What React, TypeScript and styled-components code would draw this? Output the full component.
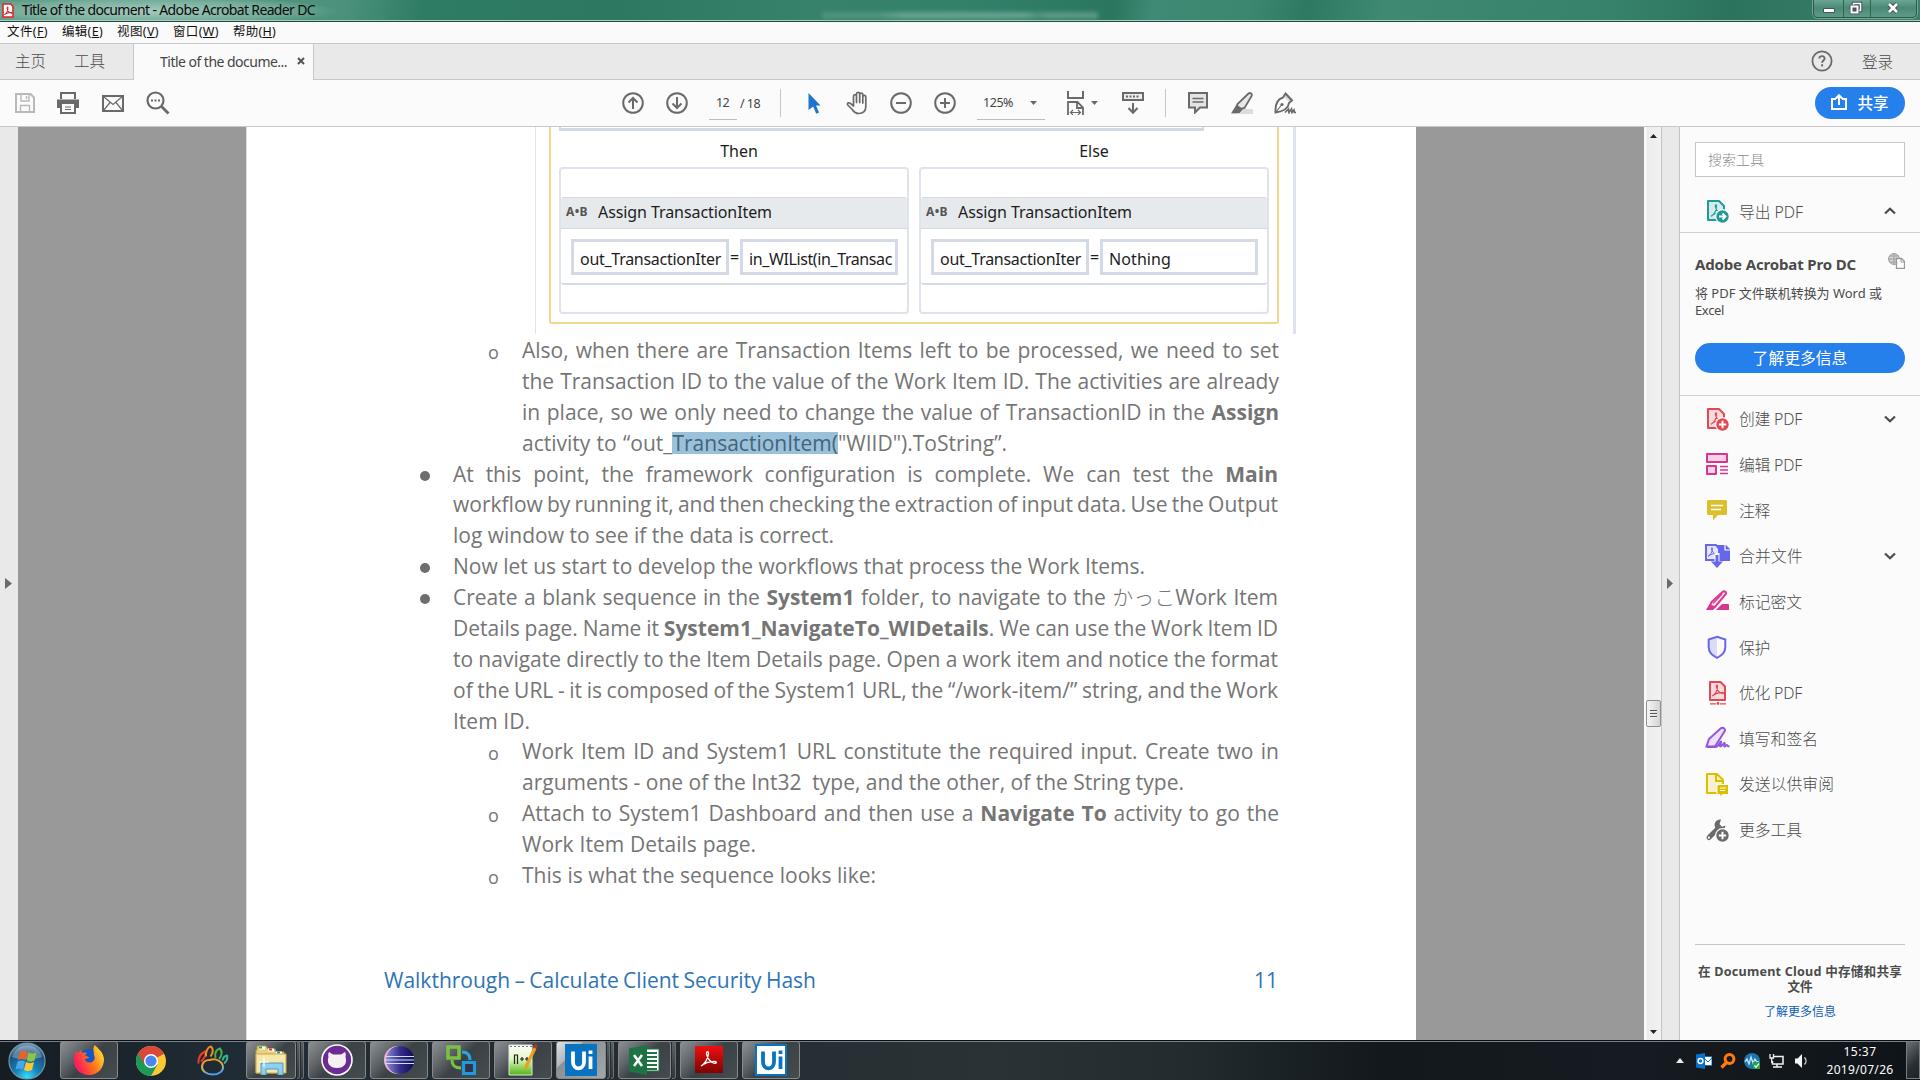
import React, { useLayoutEffect, useRef, useState } from "react";
import styled, { createGlobalStyle, css } from "styled-components";

const UI = `"Noto Sans", "Noto Sans CJK SC", "Open Sans", sans-serif`;
const DOC = `"Open Sans", "Noto Sans CJK JP", sans-serif`;

const Global = createGlobalStyle`
  * { box-sizing: border-box; }
  body { margin: 0; overflow: hidden; background: #fafafa; font-family: ${UI}; }
`;

/* ---------- text fitted to a given width ---------- */

const FitSpan = styled.span`
  display: inline-block;
  white-space: pre;
  flex: none;
`;

type FitProps = { w: number; by?: "word" | "letter"; children: React.ReactNode };

function Fit({ w, by = "letter", children }: FitProps) {
  const ref = useRef<HTMLSpanElement>(null);
  const [gap, setGap] = useState(0);
  useLayoutEffect(() => {
    const el = ref.current;
    if (!el) return;
    const text = el.textContent || "";
    const n = by === "word" ? text.split(" ").length - 1 : text.length;
    if (n > 0) setGap((w - el.getBoundingClientRect().width) / n);
  }, []);
  return (
    <FitSpan ref={ref} style={by === "word" ? { wordSpacing: gap } : { letterSpacing: gap }}>
      {children}
    </FitSpan>
  );
}

/* ---------- window chrome ---------- */

const Window = styled.div`
  width: 1920px;
  height: 1080px;
  display: flex;
  flex-direction: column;
  overflow: hidden;
`;

const TitleBar = styled.header`
  height: 22px;
  flex: none;
  display: flex;
  align-items: flex-start;
  border-bottom: 1px solid #1d4a3f;
  box-shadow: inset 0 -1px 0 #a9cfc2;
  background: radial-gradient(ellipse 190px 15px at 150px 11px, rgba(190, 218, 208, 0.75), rgba(150, 195, 180, 0.5) 70%, transparent),
    linear-gradient(100deg, #5d9c87 0, #4c917b 18%, #2f7c65 22%, #2c7860 32%, #37826b 42%, #34806a 50%, #2a765f 58%, #3f8a74 60%, #3b8770 65%, #2d7962 68%, #3f8973 72%, #37826b 84%, #2c735d 90%, #3d7f6a 100%);
`;

const AppMark = styled.div`
  width: 22px;
  height: 20px;
  padding: 3px 0 0 2px;
`;

const WindowTitle = styled.div`
  width: 800px;
  font-size: 14px;
  line-height: 20px;
  color: #0b0b0b;
`;

const Ghost = styled.div`
  width: 276px;
  height: 7px;
  margin-top: 12px;
  filter: blur(2px);
  background: linear-gradient(90deg, #5f9d8a 0 20%, #7fb5a4 30% 74%, #5f9d8a 78%, #74ab9a 82% 100%);
  opacity: 0.65;
`;

const Controls = styled.div`
  margin-left: auto;
  margin-right: 3px;
  width: 104px;
  height: 18px;
  display: flex;
  border: 1px solid #2a5a4c;
  border-top: 0;
  border-radius: 0 0 5px 5px;
  box-shadow: 0 0 0 1px rgba(190, 220, 210, 0.45);
  background: linear-gradient(#6ba593, #4b8a76 45%, #5f9a88);
`;

const Control = styled.div<{ $w: number }>`
  width: ${(p) => p.$w}px;
  display: flex;
  justify-content: center;
  & + & { border-left: 1px solid #2f6353; }
`;

const MenuBar = styled.nav`
  height: 22px;
  flex: none;
  display: flex;
  padding-left: 7px;
  gap: 14px;
  border-bottom: 1px solid #c8c8c8;
  font-size: 12.5px;
  line-height: 20px;
  color: #111;
  background: #fafafa;
`;

const TabBar = styled.div`
  height: 36px;
  flex: none;
  display: flex;
  align-items: stretch;
  background: #e9e9e9;
  box-shadow: inset 0 -1px 0 #c8c8c8;
  color: #4b4b4b;
`;

const TabLabel = styled.div<{ $ml: number }>`
  margin-left: ${(p) => p.$ml}px;
  font-size: 15.5px;
  font-weight: 300;
  line-height: 34px;
`;

const DocTab = styled.div`
  margin-left: 28px;
  width: 181px;
  padding: 0 0 2px 26px;
  display: flex;
  align-items: center;
  gap: 10px;
  background: #fafafa;
  border: solid #c8c8c8;
  border-width: 0 1px;
  font-size: 14px;
  color: #444;
`;

const TabRight = styled.div`
  margin-left: auto;
  margin-right: 27px;
  padding-bottom: 2px;
  display: flex;
  align-items: center;
  gap: 29px;
  font-size: 15.5px;
  font-weight: 300;
`;

const Toolbar = styled.div`
  height: 47px;
  flex: none;
  display: flex;
  align-items: center;
  background: #fbfbfb;
  border-bottom: 1px solid #c8c8c8;
  color: #6a6a6a;
`;

const Slot = styled.div<{ $ml: number; $w: number }>`
  margin-left: ${(p) => p.$ml}px;
  width: ${(p) => p.$w}px;
  flex: none;
  height: 24px;
  display: flex;
  align-items: center;
  justify-content: center;
`;

const Field = styled.div<{ $ml: number; $w: number; $pl: number }>`
  margin: 4px 0 0 ${(p) => p.$ml}px;
  width: ${(p) => p.$w}px;
  padding: 0 8px 4px ${(p) => p.$pl}px;
  flex: none;
  height: 29px;
  display: flex;
  align-items: center;
  justify-content: space-between;
  border-bottom: 1px solid #bdbdbd;
  font-size: 12.5px;
  color: #444;
`;

const PageTotal = styled.div`
  margin-left: 3px;
  width: 20px;
  font-size: 12.5px;
  color: #444;
`;

const Divider = styled.div<{ $ml: number }>`
  margin-left: ${(p) => p.$ml}px;
  width: 1px;
  height: 28px;
  background: #c6c6c6;
`;

const ShareButton = styled.button`
  margin: 0 15px 0 auto;
  width: 90px;
  height: 32px;
  border: 0;
  border-radius: 16px;
  background: #2680eb;
  color: #fff;
  font: 500 15.5px ${UI};
  display: flex;
  align-items: center;
  justify-content: center;
  gap: 10px;
  padding: 0 0 2px;
`;

/* ---------- body ---------- */

const Body = styled.div`
  flex: 1;
  display: flex;
  min-height: 0;
`;

const SideStrip = styled.div<{ $w: number; $right?: boolean }>`
  width: ${(p) => p.$w}px;
  flex: none;
  display: flex;
  align-items: center;
  padding-left: 5px;
  background: #e9e9e9;
  ${(p) => p.$right && css`border: solid #c4c4c4; border-width: 0 1px;`}
`;

const Canvas = styled.main`
  width: 1626px;
  flex: none;
  padding: 0 228px;
  background: #999;
  overflow: hidden;
`;

const Sheet = styled.article`
  width: 1170px;
  height: 100%;
  background: #fff;
  font-family: ${DOC};
  font-size: 21px;
  color: #757575;
  border-left: 1px solid #ddd;
`;

/* diagram */

const Figure = styled.figure`
  margin: 0 0 1px 288px;
  width: 761px;
  height: 207px;
  padding-left: 13px;
  border: solid #dfe4ec;
  border-width: 0 3px 0 1px;
  font-family: ${UI};
  font-size: 16px;
  color: #1d1d1d;
`;

const IfFrame = styled.div`
  width: 730px;
  height: 197px;
  padding: 0 8px;
  border: 2px solid #f0d68c;
  border-top: 0;
  border-radius: 0 0 3px 3px;
`;

const Condition = styled.div`
  width: 645px;
  height: 4px;
  border: solid #d3dae5;
  border-width: 0 2px 3px;
`;

const Branches = styled.div`
  display: flex;
  gap: 10px;
`;

const Branch = styled.section`
  width: 350px;
`;

const BranchName = styled.div<{ $shift: number }>`
  height: 36px;
  line-height: 41px;
  text-align: center;
  padding-left: ${(p) => p.$shift}px;
`;

const BranchBox = styled.div`
  height: 147px;
  border: 2px solid #dfe4ec;
  border-radius: 4px;
  padding-top: 28px;
`;

const Activity = styled.div`
  height: 88px;
  border: 1px solid #d3dae5;
  border-width: 1px 0 2px;
  border-radius: 3px;
`;

const ActivityHead = styled.div`
  height: 31px;
  display: flex;
  align-items: center;
  gap: 10px;
  padding: 0 0 3px 5px;
  background: #e7eaed;
  border-bottom: 1px solid #d3dae5;
`;

const AB = styled.span`
  font-size: 12px;
  font-weight: 700;
  color: #555;
  display: inline-flex;
  width: 22px;
`;

const AssignRow = styled.div`
  display: flex;
  align-items: center;
  padding: 10px 0 0 10px;
`;

const Input = styled.div`
  width: 158px;
  height: 36px;
  border: 3px solid #d3dae5;
  padding: 0 3px 0 6px;
  line-height: 34px;
  white-space: nowrap;
`;

const Equals = styled.div`
  width: 11px;
  display: flex;
  justify-content: center;
  font-size: 16px;
`;

/* document text */

const Line = styled.div<{ $level: 1 | 2 }>`
  height: 30.88px;
  line-height: 30.88px;
  display: flex;
  padding-left: ${(p) => (p.$level === 1 ? 172 : 241)}px;
`;

const Marker = styled.div<{ $level: 1 | 2 }>`
  width: 34px;
  flex: none;
  font-size: 18px;
  padding-top: 2px;
`;

const Dot = styled.div`
  width: 10px;
  height: 10px;
  margin-top: 10px;
  margin-left: 1px;
  border-radius: 50%;
  background: #6e6e6e;
`;

const Mark = styled.span`
  background: #99c1da;
  color: #46637a;
  padding: 0;
  line-height: 22px;
  display: inline-block;
  height: 22px;
`;

const Kana = styled.span`
  font-family: "Noto Sans CJK JP", sans-serif;
  font-weight: 300;
  font-size: 21px;
  line-height: 20px;
`;

const PageFooter = styled.footer`
  margin: 74px 138px 0 137px;
  line-height: 31px;
  display: flex;
  justify-content: space-between;
  color: #2e74b5;
`;

/* scrollbar */

const ScrollBar = styled.div`
  width: 17px;
  flex: none;
  display: flex;
  flex-direction: column;
  align-items: center;
  padding: 7px 1px 6px 2px;
  background: linear-gradient(90deg, #fafafa 0 2px, #ececec 3px, #f2f2f2);
`;

const Thumb = styled.div`
  width: 15px;
  height: 27px;
  margin: 562px 0 auto;
  border: 1px solid #8f8f8f;
  border-radius: 2px;
  background: linear-gradient(90deg, #f5f5f5, #d4d4d8);
  display: flex;
  flex-direction: column;
  align-items: center;
  justify-content: center;
  gap: 1px;
`;

const Grip = styled.i`
  width: 7px;
  height: 2px;
  background: #555;
  border-bottom: 1px solid #eee;
`;

/* tools panel */

const Panel = styled.aside`
  flex: 1;
  display: flex;
  flex-direction: column;
  background: #fbfbfb;
  color: #4b4b4b;
`;

const Search = styled.div`
  margin: 15px 15px 0;
  height: 35px;
  flex: none;
  border: 1px solid #c6c6c6;
  background: #fff;
  padding-left: 12px;
  font-size: 14px;
  font-weight: 300;
  line-height: 33px;
  color: #8a8a8a;
`;

const ToolRow = styled.div<{ $h: number; $rule?: boolean }>`
  height: ${(p) => p.$h}px;
  flex: none;
  display: flex;
  align-items: center;
  padding: 0 24px 0 25px;
  font-size: 15.8px;
  font-weight: 300;
  ${(p) => p.$rule && css`border-bottom: 1px solid #d0d0d0; margin-top: 15px; padding-bottom: 2px;`}
`;

const ToolIcon = styled.div`
  width: 24px;
  height: 24px;
  margin-right: 10px;
`;

const Chevron = styled.div`
  margin-left: auto;
  display: flex;
`;

const Promo = styled.div`
  height: 163px;
  flex: none;
  border-bottom: 1px solid #d0d0d0;
  padding: 20px 15px 0;
  font-size: 13px;
  line-height: 17px;
`;

const PromoHead = styled.div`
  display: flex;
  justify-content: space-between;
  height: 32px;
  font-size: 15px;
  font-weight: 700;
  line-height: 23px;
`;

const PromoButton = styled.button`
  margin-top: 24px;
  width: 210px;
  height: 30px;
  border: 0;
  border-radius: 15px;
  padding: 0;
  background: #2680eb;
  color: #fff;
  font: 400 15.8px/30px ${UI};
`;

const ToolList = styled.div`
  height: 459px;
`;

const CloudNote = styled.div`
  margin: auto 15px 11px;
  height: 85px;
  border-top: 1px solid #c6c6c6;
  padding-top: 19px;
  text-align: center;
  font-size: 12.6px;
  font-weight: 700;
  line-height: 15px;
`;

const CloudLink = styled.a`
  display: block;
  margin-top: 10px;
  font-size: 12px;
  font-weight: 400;
  color: #0d5bb5;
`;

/* taskbar */

const TaskBar = styled.footer`
  height: 40px;
  flex: none;
  display: flex;
  align-items: stretch;
  border-top: 1px solid #0b0f13;
  box-shadow: inset 0 1px 0 #75818d;
  background: linear-gradient(90deg, #151c22, #202c35 12%, #232b31 30%, #2a3236 52%, #232b2f 62%, #12181c 72%, #151b20 85%, #0f1418);
`;

const Orb = styled.div`
  width: 60px;
  display: flex;
  padding: 1px 0 0 8px;
`;

const Task = styled.div<{ $w: number; $plain?: boolean; $active?: boolean; $ml?: number }>`
  width: ${(p) => p.$w}px;
  margin-left: ${(p) => p.$ml ?? 4}px;
  display: flex;
  align-items: center;
  justify-content: center;
  ${(p) =>
    !p.$plain &&
    css`
      border: 1px solid #87898b;
      border-radius: 3px;
      margin-bottom: 1px;
      background: ${p.$active
        ? "linear-gradient(135deg, #e0e2e3 0, #b4b8ba 30%, #8a9093 32%, #a2a7a9 100%)"
        : "linear-gradient(135deg, #8b9093 0, #5f6569 30%, #3b4246 50%, #454c50 100%)"};
    `}
`;

const Stack = styled.div<{ $w: number }>`
  width: ${(p) => p.$w}px;
  margin: 0 0 1px 1px;
  border: solid #6b7175;
  border-width: 1px 1px 1px 0;
  border-radius: 0 3px 3px 0;
  background: linear-gradient(#5b6266, #2f363a);
`;

const Tray = styled.div`
  margin-left: auto;
  display: flex;
  align-items: center;
`;

const TraySlot = styled.div<{ $ml: number }>`
  margin-left: ${(p) => p.$ml}px;
  display: flex;
`;

const Clock = styled.div`
  width: 92px;
  margin-left: 6px;
  padding-top: 1px;
  color: #fff;
  font-size: 12px;
  line-height: 18px;
  text-align: center;
`;

const ShowDesktop = styled.div`
  width: 14px;
  margin-bottom: 1px;
  align-self: stretch;
  border: 1px solid #777d82;
  background: linear-gradient(135deg, #6b7074, #2a2f33 60%, #1c2125);
`;

/* ---------- drawings ---------- */

const Svg = ({ w, h = w, vb, children }: { w: number; h?: number; vb?: string; children: React.ReactNode }) => (
  <svg width={w} height={h} viewBox={vb ?? `0 0 ${w} ${h}`} fill="none" display="block">
    {children}
  </svg>
);

const G = "#6a6a6a";
const ACRO = "M5 16.2c2.8-1.4 5.3-5.4 5.6-10.2.2-1.8-1.6-1.5-1.3.2.6 3.9 3.5 7.4 6.6 7.7 1.6 0 1.1-1.5-.5-1.4-3.4.1-7.4 1.4-10.4 3.7z";

const CircleIcon = ({ d }: { d: string }) => (
  <Svg w={22}>
    <circle cx="11" cy="11" r="9.8" stroke={G} strokeWidth="2" />
    <path d={d} stroke={G} strokeWidth="2" />
  </Svg>
);

const Caret = () => (
  <Svg w={7} h={4}><path d="M0 0h7L3.5 4z" fill={G} /></Svg>
);

const SaveIcon = () => (
  <Svg w={20}>
    <path d="M1 1h14.5L19 4.5V19H1z" stroke="#b9b9b9" strokeWidth="2" />
    <path d="M6 1v7h8V1M11.5 3v3M5.5 19v-6.5h9V19" stroke="#b9b9b9" strokeWidth="1.4" />
  </Svg>
);
const PrintIcon = () => (
  <Svg w={22}>
    <path d="M0 7.5h22V16h-3.500v-4h-15v4H0z" fill={G} />
    <path d="M4 7V1h14v6M4 12v9h14v-9" stroke={G} strokeWidth="2" />
    <path d="M8 15h6M8 17.500h6" stroke={G} />
  </Svg>
);
const MailIcon = () => (
  <Svg w={22} h={17}>
    <path d="M1 1h20v15H1z" stroke={G} strokeWidth="2" />
    <path d="M1.5 1.5L11 9.5l9.5-8M1.5 15.5L8 7.5M20.500 15.500L14 7.500" stroke={G} strokeWidth="1.2" />
  </Svg>
);
const FindIcon = () => (
  <Svg w={24}>
    <circle cx="9.500" cy="9.500" r="8" stroke={G} strokeWidth="2.2" />
    <path d="M15.500 15.500L22.500 22.500" stroke={G} strokeWidth="2.8" />
    <path d="M5 8.500h2v2H5zM8.500 8.500h2v2h-2zM12 8.500h2v2h-2z" fill={G} />
  </Svg>
);
const HandIcon = () => (
  <Svg w={24}>
    <path d="M7.500 15V5.200c0-2.200 3-2.200 3 0V11.500V3c0-2.200 3.200-2.200 3.200 0v8.500V3.600c0-2.100 3.100-2.100 3.100 0V12V5.800c0-1.900 3-1.900 3 0V15.500c0 4.500-2.800 7-7 7-3.400 0-5-1.500-6.500-4L1.700 14c-1-2.200 1.500-3 3-1.300z"
      stroke={G} strokeWidth="1.700" strokeLinejoin="round" />
  </Svg>
);
const PointerIcon = () => (
  <Svg w={13} h={21}>
    <path d="M.5 0L12.500 12.500H8l3 7-2.800 1.300-3-7.300L.5 17z" fill="#1f74cf" />
  </Svg>
);
const FitPageIcon = () => (
  <Svg w={17} h={24}>
    <path d="M1 0v7h15V0" stroke={G} strokeWidth="2" />
    <path d="M1 24V11h9.500L16 16.500V24M10 11v6h6" stroke={G} strokeWidth="1.800" />
    <path d="M4 21.500h9M6 19l-2.500 2.500L6 24M11 19l2.500 2.500L11 24" stroke={G} strokeWidth="1.200" />
  </Svg>
);
const ScrollIcon = () => (
  <Svg w={22}>
    <path d="M1 1h20v7H1z" fill="#ededed" stroke={G} strokeWidth="2" />
    <path d="M4 4.500h14" stroke={G} strokeWidth="2" strokeDasharray="2 1.500" />
    <path d="M11 11v9.500M6.500 16l4.500 4.800 4.500-4.800" stroke={G} strokeWidth="2" />
  </Svg>
);
const NoteIcon = () => (
  <Svg w={20} h={22}>
    <path d="M1 1h18v14.500h-7L7 20.500v-5H1z" fill="#e4e4e4" stroke={G} strokeWidth="2" />
    <path d="M4.500 6.500h11M4.500 10h11" stroke={G} strokeWidth="1.300" />
  </Svg>
);
const MarkerIcon = () => (
  <Svg w={24} h={22}>
    <path d="M7 17h16v5H4z" fill="#dcdcdc" />
    <path d="M18.500 1.500c2-1.300 4 .5 3 2.700L14.500 16 6 18l1.500-6z" fill="#e8e8e8" stroke={G} strokeWidth="1.800" />
    <path d="M6.500 12.500l6.500 4.500-3.500 4-8.500.5z" fill={G} />
  </Svg>
);
const PenIcon = () => (
  <Svg w={24} h={22}>
    <path d="M13 1l7 6-3 3.500-6.500-6z" fill="#d8d8d8" />
    <path d="M12.500 1.500L19 8.500 16 11c-.5 5-4 8-13.500 9.500C2 12 4.500 7 10 5.500z" stroke={G} strokeWidth="1.900" />
    <path d="M2.500 20.500L8.500 13" stroke={G} strokeWidth="1.200" />
    <circle cx="9" cy="12.500" r="1.600" fill={G} />
    <path d="M12 20.500l3.500-3.500.5 3.500 2.500-3.500.5 3.500 2-2.500.5 2.500H23" stroke={G} strokeWidth="1.700" />
  </Svg>
);

const Sheetlet = ({ c, f, mark = true }: { c: string; f: string; mark?: boolean }) => (
  <>
    <path d="M3 2h11l5 5v14H3z" fill={f} stroke={c} strokeWidth="2" strokeLinejoin="round" />
    {mark && <path d={ACRO} transform="translate(1 1)" stroke={c} strokeWidth="1.100" />}
  </>
);

const toolArt: Record<string, React.ReactNode> = {
  export: (
    <Svg w={24}>
      <Sheetlet c="#1f9a95" f="#d3ebea" />
      <circle cx="17.500" cy="17.500" r="6.800" fill="#1f9a95" stroke="#fbfbfb" strokeWidth="1.200" />
      <path d="M14 17.500h6M17.500 14.500l3 3-3 3" stroke="#fff" strokeWidth="1.800" />
    </Svg>
  ),
  create: (
    <Svg w={24}>
      <Sheetlet c="#e34850" f="#f8dcdd" />
      <circle cx="17.500" cy="17.500" r="6.800" fill="#e34850" stroke="#fbfbfb" strokeWidth="1.200" />
      <path d="M13.800 17.500h7.400M17.500 13.800v7.400" stroke="#fff" strokeWidth="2" />
    </Svg>
  ),
  edit: (
    <Svg w={24}>
      <path d="M2 2h20v8H2zM2 14h9v8H2z" fill="#f5d3e7" stroke="#d83790" strokeWidth="2" strokeLinejoin="round" />
      <path d="M15 14.500h8M15 18h8M15 21.500h8" stroke="#d83790" strokeWidth="1.300" />
    </Svg>
  ),
  comment: (
    <Svg w={24}>
      <path d="M3.500 2h17Q22 2 22 3.500v12q0 1.500-1.500 1.500H13l-5 5.500V17H3.500Q2 17 2 15.500v-12Q2 2 3.500 2z" fill="#dcbf2a" />
      <path d="M6 7.500h12M6 11.500h10" stroke="#fff" strokeWidth="1.600" />
    </Svg>
  ),
  combine: (
    <Svg w={25} h={24}>
      <path d="M12 1h9l4 4v12H12z" fill="#6767ec" />
      <path d="M20 0v6h5" stroke="#fbfbfb" strokeWidth="1.200" />
      <path d="M1 1h10l3 4v11H1z" fill="#e6e6fb" stroke="#6767ec" strokeWidth="2" />
      <path d={ACRO} transform="translate(-.5 0) scale(.75)" stroke="#6767ec" strokeWidth="1.300" />
      <path d="M12 9v9" stroke="#fbfbfb" strokeWidth="5" />
      <path d="M12 11v8" stroke="#6767ec" strokeWidth="3" />
      <path d="M6 17.500h12L12 24z" fill="#6767ec" />
    </Svg>
  ),
  redact: (
    <Svg w={24}>
      <path d="M11 21l6-6h6q1 0 1 1v5z" fill="#d83790" />
      <path d="M17.500 3c2-1.800 4.500.5 3 2.500L10 18l-5-1 1.500-4z" fill="#f8dfec" stroke="#d83790" strokeWidth="2" />
      <path d="M8 14.500L17 5" stroke="#d83790" strokeWidth="1.200" />
      <path d="M4.500 15l5.500 4-2 2H1z" fill="#d83790" />
    </Svg>
  ),
  protect: (
    <Svg w={24}>
      <path d="M12 2L3.500 4.500V12c0 5 3.500 8.500 8.500 11z" fill="#dcdcf8" />
      <path d="M12 1.800L20.300 4.500V12c0 5-3.300 8.500-8.300 10.800C7 20.500 3.700 17 3.700 12V4.500z" stroke="#6767ec" strokeWidth="2" />
    </Svg>
  ),
  optimize: (
    <Svg w={24}>
      <path d="M5 1h10.500L20 5.500V19H5z" fill="#f8dcdd" stroke="#e34850" strokeWidth="2" strokeLinejoin="round" />
      <path d={ACRO} transform="translate(2.500 -.5) scale(.95)" stroke="#e34850" strokeWidth="1.200" />
      <path d="M5 22.800h6M15 22.800h6" stroke="#e34850" strokeWidth="1.300" />
      <circle cx="13" cy="22.500" r="1.400" fill="#e34850" />
    </Svg>
  ),
  sign: (
    <Svg w={25} h={24}>
      <path d="M15.500 2.500c2.500-2 5.500.5 4 3L10 20.500H1.500L4 13z" fill="#ecdff8" stroke="#9256d9" strokeWidth="2" />
      <path d="M2 21h8c4 0 5-6 6-5.500s-2 5-.5 5 3-4 4-3.500-1 3.500 0 3.500 2-2 2.500-1.500 0 1.500 2.500 1.500" stroke="#9256d9" strokeWidth="2" />
    </Svg>
  ),
  send: (
    <Svg w={24}>
      <path d="M2 2h10l6 6v13H2z" fill="#f7f1cf" stroke="#dcc000" strokeWidth="2" strokeLinejoin="round" />
      <path d="M11 2v7h7" stroke="#dcc000" strokeWidth="2" />
      <path d="M12 12.500h11.500v10H18L15 25v-2.500h-3z" fill="#dcc000" stroke="#fbfbfb" strokeWidth="1" />
      <path d="M15 16h6M15 18.500h5" stroke="#fff" strokeWidth="1.200" />
    </Svg>
  ),
  more: (
    <Svg w={24}>
      <path d="M4 19.500L14 9.500" stroke={G} strokeWidth="5" strokeLinecap="round" />
      <path d="M16 1.500A5.500 5.500 0 1 0 20.500 7.500l-3.500 1.200-2.500-2.500z" fill={G} />
      <circle cx="3.900" cy="19.700" r="1.100" fill="#fbfbfb" />
      <circle cx="17.500" cy="17.500" r="6.800" fill={G} stroke="#fbfbfb" strokeWidth="1.200" />
      <path d="M13.800 17.500h7.400M17.500 13.800v7.400" stroke="#fff" strokeWidth="2" />
    </Svg>
  ),
};

const ChevronIcon = ({ up }: { up?: boolean }) => (
  <Svg w={12} h={8}>
    <path d={up ? "M1 6.500l5-4.800 5 4.800" : "M1 1.500l5 4.800 5-4.800"} stroke="#4b4b4b" strokeWidth="2.200" />
  </Svg>
);

const AdobeTile = () => (
  <Svg w={28}>
    <defs>
      <linearGradient id="acr" x1="0" y1="0" x2="0" y2="1"><stop stopColor="#f01010" /><stop offset="1" stopColor="#7d0303" /></linearGradient>
    </defs>
    <path d="M0 0h28v27H0z" fill="url(#acr)" />
    <path d="M6 20c3.500-2 7-7 7.500-12.500.2-2.600-2.300-2.200-2 .2.8 5 4.500 9.300 8.500 9.600 2.200 0 1.600-2-.8-1.900-4.500.2-9.400 1.600-13.200 4.600z" stroke="#fff" strokeWidth="1.300" />
  </Svg>
);

const UiTile = ({ inv }: { inv?: boolean }) => (
  <Svg w={32}>
    <path d="M0 0h32v32H0z" fill={inv ? "#fff" : "#0a73c0"} stroke={inv ? "#0a73c0" : "none"} strokeWidth={inv ? 4 : 0} />
    <path d="M8 7.500V18c0 8.500 11 8.500 11 0V7.500M25.500 12.500V25M25.500 6.500V10" stroke={inv ? "#0a73c0" : "#fff"} strokeWidth="3.800" />
  </Svg>
);

const FirefoxIcon = () => (
  <Svg w={30}>
    <defs>
      <linearGradient id="ff" x1=".1" y1=".6" x2="1" y2=".2"><stop stopColor="#ff1f5a" /><stop offset=".5" stopColor="#ff7a18" /><stop offset="1" stopColor="#ffe83a" /></linearGradient>
    </defs>
    <circle cx="15" cy="14" r="10" fill="#1257c9" />
    <path d="M2 6l2 2 3-3 1 3c3-1 5 0 5 0l-2 2c1 2 4 1 4 3l-4 1c0 4 7 5 9 1 2-3-1-5 0-7-1-4-1-6 1-8 2 3 8 6 9 14 0 9-6 16-15 16S0 23 0 16C0 11 1 9 2 6z" fill="url(#ff)" />
  </Svg>
);
const ChromeIcon = () => (
  <Svg w={30}>
    <circle cx="15" cy="15" r="15" fill="#fcc934" />
    <path d="M15 15L2 7.500A15 15 0 0 1 28 7.800z" fill="#d9483b" />
    <path d="M15 15H8.500L2 7.500A15 15 0 0 0 15 30l6.500-11.500z" fill="#1b9a57" />
    <path d="M15 8h13A15 15 0 0 0 2 7.500l6.500 11z" fill="#d9483b" />
    <circle cx="15" cy="15" r="7" fill="#fff" />
    <circle cx="15" cy="15" r="5.600" fill="#4a86ee" />
  </Svg>
);
const PawIcon = () => (
  <Svg w={32} h={31}>
    <defs><linearGradient id="paw" x1="0" y1="0" x2=".3" y2="1"><stop stopColor="#ff8a1e" /><stop offset=".6" stopColor="#d9b04a" /><stop offset="1" stopColor="#4f9df5" /></linearGradient></defs>
    <path d="M5 22c0-5 4-7.500 8-7 6-2.500 13 2 13 7.500 0 4-4.500 7-10.500 7S5 26 5 22z" stroke="url(#paw)" strokeWidth="2" />
    <path d="M1.500 18.500C1 12.500 4 8.500 8 6.500c1.500 3-1 7-4 10" stroke="#ee3a2c" strokeWidth="2" />
    <path d="M9 11.500C8.500 6.500 10.500 2 14 1.500c2.500 2.500 2 6.500-.5 10" stroke="#f48b1d" strokeWidth="2" />
    <path d="M18.500 13c-1-5 1-8.500 4.500-9.500 2.500 3 2 7.500-1 10.500" stroke="#4bb04a" strokeWidth="2" />
    <path d="M25.500 15.500c.5-3 2-4.500 4.500-5 1 3 0 5.500-3 8" stroke="#2fb7a0" strokeWidth="1.800" />
  </Svg>
);
const FolderIcon = () => (
  <Svg w={32} h={30}>
    <path d="M2 5V1h9l2 3h7l1 3h8v21H1V5z" fill="#e8cf7f" stroke="#b8973e" />
    <path d="M4 3h6M13 5h6M21 8h6" stroke="#fff" strokeWidth="3" />
    <path d="M4 2.500h3" stroke="#2a2" strokeWidth="2" /><path d="M14 4.500h3" stroke="#d33" strokeWidth="2" /><path d="M22 7.500h3" stroke="#28c" strokeWidth="2" />
    <path d="M1 9h30v19H1z" fill="#f7e7a9" stroke="#caa94f" />
    <path d="M6 30V18h22v12h-5v-6H11v6z" fill="#8fd0ee" stroke="#4b9cc4" />
    <path d="M9 12v10M4 17h10" stroke="#fff" strokeWidth="1.200" />
  </Svg>
);
const GitIcon = () => (
  <Svg w={32}>
    <circle cx="16" cy="16" r="15" fill="#6f2b94" stroke="#fff" strokeWidth="1.600" />
    <path d="M8 8l4 2.500h8L24 8c1 2 1 3 .5 5 2 6-1 11-8.500 11S5.500 19 7.500 13C7 11 7 10 8 8z" fill="#f4f0f4" />
  </Svg>
);
const EclipseIcon = () => (
  <Svg w={32} h={30}>
    <defs><linearGradient id="ecl"><stop stopColor="#8f8bd0" /><stop offset=".5" stopColor="#352f8a" /><stop offset="1" stopColor="#0f0a55" /></linearGradient></defs>
    <circle cx="15" cy="15" r="14" fill="#f3b3d8" />
    <circle cx="17" cy="15" r="14" fill="url(#ecl)" />
    <path d="M3 11.500h28M2 15h29M3 18.500h28" stroke="#cfe0ff" strokeWidth="1.100" />
  </Svg>
);
const LinkIcon = () => (
  <Svg w={32}>
    <path d="M17 8c6 0 8 3 8 8" stroke="#2ba3df" strokeWidth="3" /><path d="M7 16c0 6 3 8 9 8" stroke="#7bc043" strokeWidth="3" />
    <path d="M3 3h11v11H3z" stroke="#7bc043" strokeWidth="3.600" /><path d="M18.500 18.500h11v11h-11z" fill="#334" stroke="#1e9be0" strokeWidth="3.200" />
  </Svg>
);
const NotepadIcon = () => (
  <Svg w={30} h={32}>
    <defs><linearGradient id="npp" x1="0" y1="0" x2="0" y2="1"><stop stopColor="#fff" /><stop offset=".45" stopColor="#e3f7c4" /><stop offset="1" stopColor="#51b514" /></linearGradient></defs>
    <path d="M1 1h23v30H1z" fill="url(#npp)" stroke="#dfe6dd" />
    <path d="M2 2.500h22" stroke="#777" strokeDasharray="2 2" />
    <path d="M6.500 20v-9h3v9M12 15h4M14 13v4M17 15h4M19 13v4" stroke="#222" strokeWidth="1.200" />
    <path d="M17 25L27 4" stroke="#e8a21c" strokeWidth="3.200" /><path d="M27 4l1.500-3" stroke="#b33" strokeWidth="3.200" />
  </Svg>
);
const ExcelIcon = () => (
  <Svg w={31} h={30}>
    <path d="M15 4h15v22H15z" fill="#fff" stroke="#1f7244" />
    <path d="M18 8h10M18 12h10M18 16h10M18 20h10M18 24h10" stroke="#1f7244" strokeWidth="2" />
    <path d="M0 3.500L18 0v30L0 26.500z" fill="#1f7244" />
    <path d="M5 10l8 11M13 10L5 21" stroke="#fff" strokeWidth="2.500" />
  </Svg>
);
const WindowsOrb = () => (
  <Svg w={38}>
    <defs>
      <radialGradient id="orb" cx=".5" cy=".95" r=".95"><stop stopColor="#35e0ff" /><stop offset=".35" stopColor="#1583b8" /><stop offset=".75" stopColor="#1d4f7c" /><stop offset="1" stopColor="#7fa3bd" /></radialGradient>
    </defs>
    <circle cx="19" cy="19" r="18" fill="url(#orb)" stroke="#6f97ad" strokeWidth="1.200" />
    <path d="M4 15a15.500 15.500 0 0 1 30 0c-8 3-22 3-30 0z" fill="#fff" opacity=".28" />
    <path d="M12 10c3-1.500 5-1.500 7.500 0l-2 8c-3-1.500-5-1.500-7.500 0z" fill="#ee5f26" />
    <path d="M20.500 10.500c3 1.500 5 1.500 8 0l-2 8c-3 1.500-5 1.500-7.500 0z" fill="#8ec63f" />
    <path d="M9.500 19.500c3-1.500 5-1.500 7.500 0l-2 8c-3-1.500-5-1.500-7.500 0z" fill="#44a8ea" />
    <path d="M18 20c3 1.500 5 1.500 8 0l-2 8c-3 1.500-5 1.500-8 0z" fill="#fdc62f" />
  </Svg>
);

/* ---------- content ---------- */

const menus: [string, string, number][] = [
  ["文件", "F", 41], ["编辑", "E", 41], ["视图", "V", 42], ["窗口", "W", 46], ["帮助", "H", 43],
];

const tools: { art: string; label: string; w: number; chev?: boolean }[] = [
  { art: "create", label: "创建 PDF", w: 63, chev: true },
  { art: "edit", label: "编辑 PDF", w: 63 },
  { art: "comment", label: "注释", w: 31 },
  { art: "combine", label: "合并文件", w: 64, chev: true },
  { art: "redact", label: "标记密文", w: 63 },
  { art: "protect", label: "保护", w: 31 },
  { art: "optimize", label: "优化 PDF", w: 63 },
  { art: "sign", label: "填写和签名", w: 79 },
  { art: "send", label: "发送以供审阅", w: 95 },
  { art: "more", label: "更多工具", w: 63 },
];

const L1 = 825;
const L2 = 757;

const lines: { level: 1 | 2; w: number; head?: boolean; body: React.ReactNode }[] = [
  { level: 2, w: L2, head: true, body: "Also, when there are Transaction Items left to be processed, we need to set" },
  { level: 2, w: L2, body: "the Transaction ID to the value of the Work Item ID. The activities are already" },
  { level: 2, w: L2, body: <>in place, so we only need to change the value of TransactionID in the <b>Assign</b></> },
  { level: 2, w: 485, body: <>activity to “out_<Mark>TransactionItem(</Mark>"WIID").ToString”.</> },
  { level: 1, w: L1, head: true, body: <>At this point, the framework configuration is complete. We can test the <b>Main</b></> },
  { level: 1, w: L1, body: "workflow by running it, and then checking the extraction of input data. Use the Output" },
  { level: 1, w: 381, body: "log window to see if the data is correct." },
  { level: 1, w: 692, head: true, body: "Now let us start to develop the workflows that process the Work Items." },
  { level: 1, w: L1, head: true, body: <>Create a blank sequence in the <b>System1</b> folder, to navigate to the <Kana>かっこ</Kana>Work Item</> },
  { level: 1, w: L1, body: <>Details page. Name it <b>System1_NavigateTo_WIDetails</b>. We can use the Work Item ID</> },
  { level: 1, w: L1, body: "to navigate directly to the Item Details page. Open a work item and notice the format" },
  { level: 1, w: L1, body: "of the URL - it is composed of the System1 URL, the “/work-item/” string, and the Work" },
  { level: 1, w: 77, body: "Item ID." },
  { level: 2, w: L2, head: true, body: "Work Item ID and System1 URL constitute the required input. Create two in" },
  { level: 2, w: 662, body: "arguments - one of the Int32  type, and the other, of the String type." },
  { level: 2, w: L2, head: true, body: <>Attach to System1 Dashboard and then use a <b>Navigate To</b> activity to go the</> },
  { level: 2, w: 234, body: "Work Item Details page." },
  { level: 2, w: 354, head: true, body: "This is what the sequence looks like:" },
];

const AssignBranch = ({ name, value, vw, shift }: { name: string; value: string; vw: number; shift: number }) => (
  <Branch>
    <BranchName $shift={shift}>{name}</BranchName>
    <BranchBox>
      <Activity>
        <ActivityHead>
          <AB><Fit w={22}>A•B</Fit></AB>
          <Fit w={174}>Assign TransactionItem</Fit>
        </ActivityHead>
        <AssignRow>
          <Input><Fit w={141}>out_TransactionIter</Fit></Input>
          <Equals>=</Equals>
          <Input><Fit w={vw}>{value}</Fit></Input>
        </AssignRow>
      </Activity>
    </BranchBox>
  </Branch>
);

export default function App() {
  return (
    <Window>
      <Global />
      <TitleBar>
        <AppMark>
          <Svg w={12} h={15}>
            <path d="M1 1h7.500L11 3.500V14H1z" fill="#fff" stroke="#e0262b" strokeWidth="1.600" />
            <path d={ACRO} transform="translate(-1 1) scale(.66)" stroke="#e0262b" strokeWidth="1.600" />
          </Svg>
        </AppMark>
        <WindowTitle><Fit w={293}>Title of the document - Adobe Acrobat Reader DC</Fit></WindowTitle>
        <Ghost />
        <Controls>
          <Control $w={30}><Svg w={14} h={16}><path d="M1.500 8.500h11v4h-11z" fill="#fff" stroke="#46545c" /></Svg></Control>
          <Control $w={27}>
            <Svg w={16} h={16}>
              <path d="M4.500 3.500h7v7h-7z" stroke="#46545c" strokeWidth="3.600" /><path d="M4.500 3.500h7v7h-7z" stroke="#fff" strokeWidth="1.600" />
              <path d="M2.500 6.500h6v6h-6z" fill="#46545c" stroke="#46545c" strokeWidth="3.600" /><path d="M2.500 6.500h6v6h-6z" stroke="#fff" strokeWidth="2" />
            </Svg>
          </Control>
          <Control $w={47}>
            <Svg w={14} h={16}>
              <path d="M3 4l8 8M11 4l-8 8" stroke="#46545c" strokeWidth="4.600" /><path d="M3 4l8 8M11 4l-8 8" stroke="#fff" strokeWidth="2.600" />
            </Svg>
          </Control>
        </Controls>
      </TitleBar>

      <MenuBar>
        {menus.map(([name, key, w]) => (
          <Fit key={key} w={w}>{name}(<u>{key}</u>)</Fit>
        ))}
      </MenuBar>

      <TabBar>
        <TabLabel $ml={15}>主页</TabLabel>
        <TabLabel $ml={28}>工具</TabLabel>
        <DocTab>
          <Fit w={127}>Title of the docume...</Fit>
          <Svg w={8}><path d="M1 1l6 6M7 1L1 7" stroke="#555" strokeWidth="2" /></Svg>
        </DocTab>
        <TabRight>
          <Svg w={22}>
            <circle cx="11" cy="11" r="9.600" stroke={G} strokeWidth="1.800" />
            <path d="M8.300 8.500c.2-3.500 5.700-3 5.300.2-.2 1.700-2.500 1.900-2.500 4M11.100 14.300v2.200" stroke={G} strokeWidth="1.900" />
          </Svg>
          <span>登录</span>
        </TabRight>
      </TabBar>

      <Toolbar>
        <Slot $ml={15} $w={20}><SaveIcon /></Slot>
        <Slot $ml={22} $w={22}><PrintIcon /></Slot>
        <Slot $ml={23} $w={22}><MailIcon /></Slot>
        <Slot $ml={22} $w={24}><FindIcon /></Slot>
        <Slot $ml={452} $w={22}><CircleIcon d="M11 17V6M6.500 10.500L11 6l4.500 4.500" /></Slot>
        <Slot $ml={22} $w={22}><CircleIcon d="M11 5v11M6.500 11.500L11 16l4.500-4.500" /></Slot>
        <Field $ml={21} $w={28} $pl={7}><Fit w={13}>12</Fit></Field>
        <PageTotal><Fit w={20}>/ 18</Fit></PageTotal>
        <Divider $ml={20} />
        <Slot $ml={27} $w={13}><PointerIcon /></Slot>
        <Slot $ml={25} $w={24}><HandIcon /></Slot>
        <Slot $ml={20} $w={22}><CircleIcon d="M6 11h10" /></Slot>
        <Slot $ml={22} $w={22}><CircleIcon d="M6 11h10M11 6v10" /></Slot>
        <Field $ml={21} $w={68} $pl={6}><Fit w={30}>125%</Fit><Caret /></Field>
        <Slot $ml={22} $w={17}><FitPageIcon /></Slot>
        <Slot $ml={7} $w={7}><Caret /></Slot>
        <Slot $ml={24} $w={22}><ScrollIcon /></Slot>
        <Divider $ml={21} />
        <Slot $ml={22} $w={20}><NoteIcon /></Slot>
        <Slot $ml={22} $w={24}><MarkerIcon /></Slot>
        <Slot $ml={19} $w={24}><PenIcon /></Slot>
        <ShareButton>
          <Svg w={16} h={16}>
            <path d="M5 5H1v10h14V5h-4M8 11V2M4.800 4.500L8 1.200l3.200 3.300" stroke="#fff" strokeWidth="2" />
          </Svg>
          共享
        </ShareButton>
      </Toolbar>

      <Body>
        <SideStrip $w={18}><Svg w={7} h={11}><path d="M0 0l7 5.500L0 11z" fill={G} /></Svg></SideStrip>
        <Canvas>
          <Sheet>
            <Figure>
              <IfFrame>
                <Condition />
                <Branches>
                  <AssignBranch name="Then" value="in_WIList(in_Transac" vw={143} shift={10} />
                  <AssignBranch name="Else" value="Nothing" vw={62} shift={0} />
                </Branches>
              </IfFrame>
            </Figure>
            {lines.map((l, i) => (
              <Line key={i} $level={l.level}>
                <Marker $level={l.level}>{l.head && (l.level === 1 ? <Dot /> : "o")}</Marker>
                <Fit w={l.w} by="word">{l.body}</Fit>
              </Line>
            ))}
            <PageFooter>
              <Fit w={432} by="word">Walkthrough – Calculate Client Security Hash</Fit>
              <span>11</span>
            </PageFooter>
          </Sheet>
        </Canvas>
        <ScrollBar>
          <Svg w={7} h={4}><path d="M0 4h7L3.500 0z" fill="#222" /></Svg>
          <Thumb><Grip /><Grip /><Grip /></Thumb>
          <Svg w={7} h={4}><path d="M0 0h7L3.500 4z" fill="#222" /></Svg>
        </ScrollBar>
        <SideStrip $w={19} $right><Svg w={6} h={11}><path d="M0 0l6 5.500L0 11z" fill={G} /></Svg></SideStrip>
        <Panel>
          <Search>搜索工具</Search>
          <ToolRow $h={41} $rule>
            <ToolIcon>{toolArt.export}</ToolIcon>
            <Fit w={64}>导出 PDF</Fit>
            <Chevron><ChevronIcon up /></Chevron>
          </ToolRow>
          <Promo>
            <PromoHead>
              <Fit w={161}>Adobe Acrobat Pro DC</Fit>
              <Svg w={17} h={16}>
                <circle cx="6" cy="6" r="5.400" fill="#d5d5d5" stroke="#999" />
                <path d="M6 .5v11M.5 6h11M1.500 3h9M1.500 9h9" stroke="#999" strokeWidth=".9" />
                <path d="M8.500 5.500h5l3 3v7h-8z" fill="#fff" stroke="#999" strokeWidth="1.300" />
                <path d="M13 5.500v3.500h3.500" stroke="#999" />
              </Svg>
            </PromoHead>
            <Fit w={187}>将 PDF 文件联机转换为 Word 或</Fit>
            <br />
            <Fit w={29}>Excel</Fit>
            <PromoButton>了解更多信息</PromoButton>
          </Promo>
          <ToolList>
            {tools.map((t) => (
              <ToolRow key={t.art} $h={45.65}>
                <ToolIcon>{toolArt[t.art]}</ToolIcon>
                <Fit w={t.w}>{t.label}</Fit>
                {t.chev && <Chevron><ChevronIcon /></Chevron>}
              </ToolRow>
            ))}
          </ToolList>
          <CloudNote>
            <Fit w={204}>在 Document Cloud 中存储和共享</Fit>
            <br />
            文件
            <CloudLink>了解更多信息</CloudLink>
          </CloudNote>
        </Panel>
      </Body>

      <TaskBar>
        <Orb><WindowsOrb /></Orb>
        <Task $w={58} $ml={0}><FirefoxIcon /></Task>
        <Task $w={58} $plain><ChromeIcon /></Task>
        <Task $w={58} $plain><PawIcon /></Task>
        <Task $w={50} $ml={4}><FolderIcon /></Task>
        <Stack $w={3} /><Stack $w={3} />
        <Task $w={58}><GitIcon /></Task>
        <Task $w={58}><EclipseIcon /></Task>
        <Task $w={58}><LinkIcon /></Task>
        <Task $w={58}><NotepadIcon /></Task>
        <Task $w={50} $active><UiTile /></Task>
        <Stack $w={3} /><Stack $w={3} />
        <Task $w={53}><ExcelIcon /></Task>
        <Stack $w={4} />
        <Task $w={58}><AdobeTile /></Task>
        <Task $w={58}><UiTile inv /></Task>
        <Tray>
          <TraySlot $ml={0}><Svg w={8} h={5}><path d="M0 5h8L4 0z" fill="#e8ecf0" /></Svg></TraySlot>
          <TraySlot $ml={12}>
            <Svg w={16}>
              <path d="M8 3.500h8v9H8z" fill="#fff" stroke="#0a72c6" /><path d="M8 5l4 4 4-4" stroke="#0a72c6" />
              <path d="M0 1.500L9 0v16l-9-1.500z" fill="#0a72c6" /><circle cx="4.500" cy="8" r="2.400" stroke="#fff" strokeWidth="1.500" />
            </Svg>
          </TraySlot>
          <TraySlot $ml={8}>
            <Svg w={16}><circle cx="9.500" cy="6" r="4.400" stroke="#ff7a0a" strokeWidth="3" /><path d="M6.500 9.500L1.500 14.500" stroke="#ff7a0a" strokeWidth="3.200" /></Svg>
          </TraySlot>
          <TraySlot $ml={8}>
            <Svg w={16}>
              <circle cx="8" cy="8" r="8" fill="#1e74ad" /><path d="M1 9l2-3 2 5 2-7 2 6 2-4 2 3h2" stroke="#bfe6ff" strokeWidth="1.300" />
              <path d="M9 9h7v7H9z" fill="#25a545" /><path d="M10.500 12.500l1.500 1.700 3-3.500" stroke="#fff" strokeWidth="1.300" />
            </Svg>
          </TraySlot>
          <TraySlot $ml={9}>
            <Svg w={15}><path d="M5 3.500h9v7.500H3.500V8M8 11v3M4 14h9" stroke="#f2f2f2" strokeWidth="1.500" /><path d="M1 1v4h3.500V1M2.700 5v5" stroke="#f2f2f2" strokeWidth="1.300" /></Svg>
          </TraySlot>
          <TraySlot $ml={11}>
            <Svg w={13} h={14}><path d="M0 4.500h2.500L7 0v14L2.500 9.500H0z" fill="#f4f4f4" /><path d="M9.500 3.500c2 2 2 5 0 7" stroke="#ddd" strokeWidth="1.300" /></Svg>
          </TraySlot>
          <Clock>
            <Fit w={33}>15:37</Fit>
            <br />
            <Fit w={67}>2019/07/26</Fit>
          </Clock>
          <ShowDesktop />
        </Tray>
      </TaskBar>
    </Window>
  );
}
